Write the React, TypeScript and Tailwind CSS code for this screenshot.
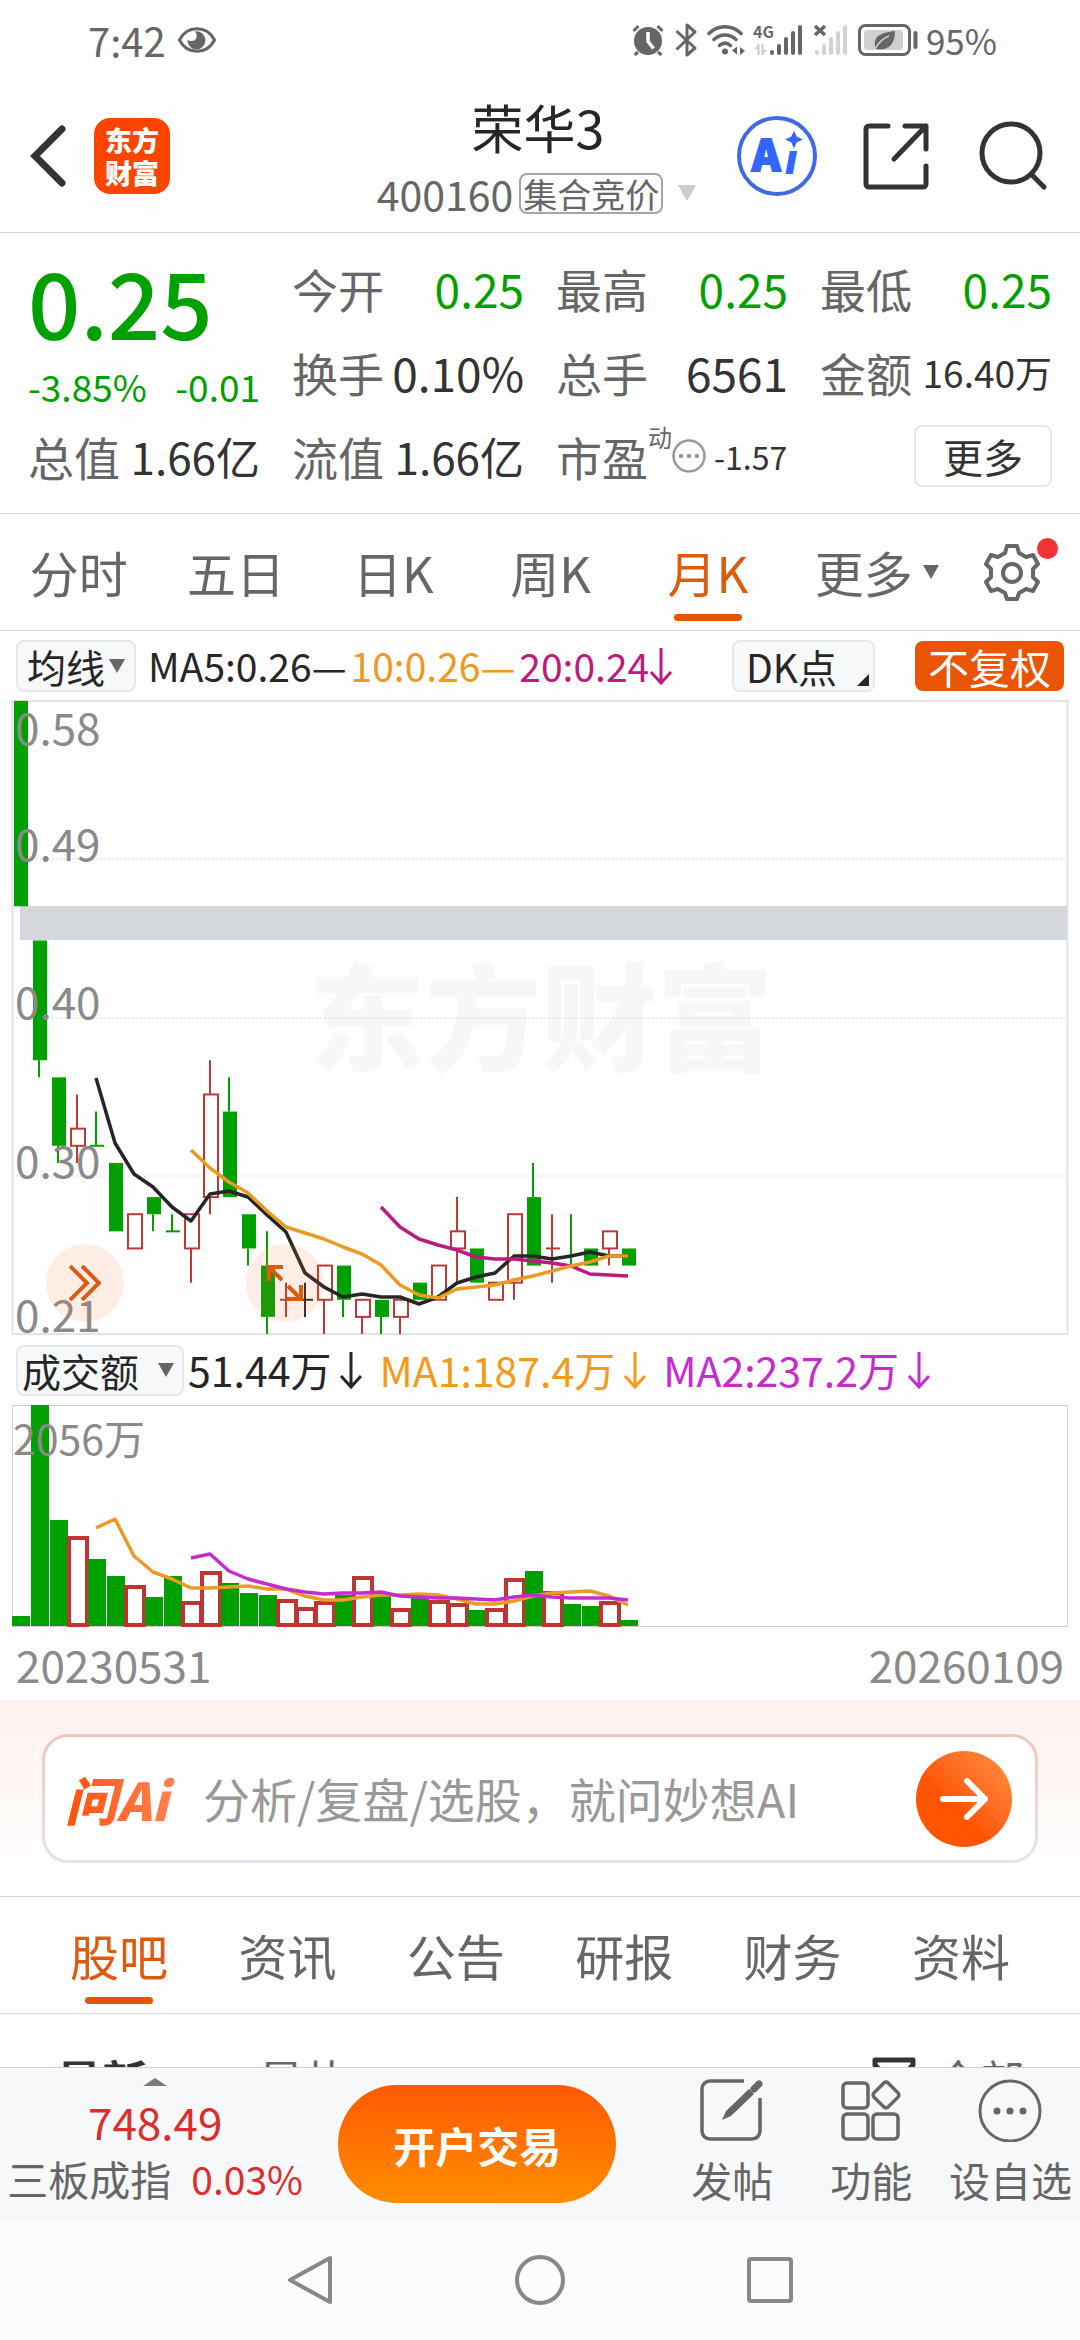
import React from "react";

type Tone = "up" | "down" | "flat";

// [tone, open, close, high, low], prices in cents
const candles: [Tone, number, number, number, number][] = [
  ["down", 58, 46, 58, 46],
  ["down", 44, 37, 44, 36],
  ["down", 36, 32, 36, 31],
  ["up", 32, 33, 35, 31],
  ["down", 32, 32, 34, 32],
  ["down", 31, 27, 31, 27],
  ["up", 26, 28, 28, 26],
  ["down", 29, 28, 29, 27],
  ["down", 27, 27, 28, 27],
  ["up", 26, 28, 28, 24],
  ["up", 29, 35, 37, 28],
  ["down", 34, 29, 36, 29],
  ["down", 28, 26, 28, 25],
  ["down", 25, 22, 27, 21],
  ["up", 23, 23, 24, 22],
  ["flat", 23, 23, 24, 22],
  ["up", 23, 25, 25, 21],
  ["down", 25, 23, 25, 22],
  ["up", 22, 23, 23, 21],
  ["down", 23, 22, 23, 21],
  ["up", 22, 23, 23, 21],
  ["down", 24, 23, 24, 23],
  ["up", 23, 25, 25, 23],
  ["up", 26, 27, 29, 24],
  ["down", 26, 24, 26, 24],
  ["up", 23, 24, 24, 23],
  ["up", 24, 28, 28, 23],
  ["down", 29, 25, 31, 25],
  ["up", 26, 26, 28, 24],
  ["down", 25, 25, 28, 25],
  ["down", 26, 25, 26, 25],
  ["up", 26, 27, 27, 25],
  ["down", 26, 25, 26, 25],
];

const volumes = [
  10, 221, 106, 90, 67, 50, 41, 29, 50, 25, 55, 43, 33, 31, 27, 19, 25, 31, 50,
  30, 18, 29, 26, 23, 16, 18, 48, 55, 35, 22, 20, 25, 6,
];

const ma5 = [
  378, 443, 474, 487, 507, 521, 494, 491, 497, 515, 532, 573, 587, 597, 594,
  597, 597, 604, 597, 583, 577, 573, 556, 556, 559, 556, 552, 556, 556,
];
const ma10 = [
  450, 468, 482, 493, 511, 527, 533, 539, 547, 554, 565, 585, 595, 598, 589,
  587, 585, 580, 576, 571, 566, 562, 556, 556,
];
const ma20 = [
  507, 527, 539, 545, 550, 557, 559, 559, 561, 563, 566, 574, 575, 576,
];
const volMa1 = [
  124, 115, 152, 168, 175, 184, 184, 183, 182, 185, 185, 192, 196, 196, 193,
  191, 191, 190, 191, 195, 200, 200, 197, 192, 189, 188, 187, 192, 201,
];
const volMa2 = [
  154, 150, 167, 175, 180, 185, 188, 190, 189, 189, 188, 192, 193, 194, 194,
  195, 196, 193, 191, 193, 194, 194, 194, 196,
];

const colors = { up: "#b93a37", down: "#00a000", flat: "#262626" };
const cx = (i: number) => 20 + i * 19;
const py = (p: number) => 634 - (p - 21) * 17.11;
const toPoints = (ys: number[], start: number) =>
  ys.map((y, i) => `${cx(start + i)},${y}`).join(" ");

const PriceChart = () => (
  <svg viewBox="0 0 1080 636" className="block w-full overflow-visible" role="img" aria-label="月K线">
    <rect x="12.5" y="1" width="1055" height="633" fill="none" stroke="#e2e3e5" strokeWidth="2" />
    <text
      x="541"
      y="362"
      textAnchor="middle"
      fontSize="116"
      className="fill-[#f7f7f7] font-black"
    >
      东方财富
    </text>
    {[159, 318, 476].map((y) => (
      <line key={y} x1="12" x2="1067" y1={y} y2={y} stroke="#dcdcdc" strokeDasharray="2 2" />
    ))}
    <rect x="20" y="206" width="1047" height="34" fill="#d4d8dc" />
    {candles.map(([tone, open, close, high, low], i) => {
      const x = cx(i);
      const top = py(Math.max(open, close));
      const bottom = py(Math.min(open, close));
      const color = colors[tone];
      return (
        <g key={i} stroke={color} strokeWidth="2">
          {high > Math.max(open, close) && <line x1={x} x2={x} y1={py(high)} y2={top} />}
          {low < Math.min(open, close) && <line x1={x} x2={x} y1={bottom} y2={py(low)} />}
          {open === close ? (
            <line x1={x - 6} x2={x + 8} y1={top} y2={top} />
          ) : tone === "up" ? (
            <rect x={x - 6} y={top} width="14" height={bottom - top} fill="#fff" />
          ) : (
            <rect x={x - 6} y={top} width="14" height={bottom - top} fill={color} stroke="none" />
          )}
        </g>
      );
    })}
    <g fill="none" strokeWidth="3.5" strokeLinejoin="round">
      <polyline points={toPoints(ma5, 4)} stroke="#262626" />
      <polyline points={toPoints(ma20, 19)} stroke="#bd1a7d" />
      <polyline points={toPoints(ma10, 9)} stroke="#eb9a24" />
    </g>
    <g fontSize="44" fill="#8a8a8a">
      <text x="15" y="45">0.58</text>
      <text x="15" y="161">0.49</text>
      <text x="15" y="319">0.40</text>
      <text x="15" y="478">0.30</text>
      <text x="15" y="632">0.21</text>
    </g>
  </svg>
);

const VolumeChart = () => (
  <svg viewBox="0 0 1080 224" className="block w-full" role="img" aria-label="成交额">
    <rect x="12.5" y="1.5" width="1055" height="221" fill="none" stroke="#cfcfcf" />
    {volumes.map((h, i) =>
      candles[i][0] === "down" ? (
        <rect key={i} x={12 + i * 19} y={222 - h} width="18" height={h} fill="#00a000" />
      ) : (
        <rect
          key={i}
          x={12 + i * 19}
          y={224 - h}
          width="18"
          height={h - 3}
          fill="#fff"
          stroke="#bf3432"
          strokeWidth="4"
        />
      )
    )}
    <g fill="none" strokeWidth="3.5" strokeLinejoin="round">
      <polyline points={toPoints(volMa1, 4)} stroke="#eb9a24" />
      <polyline points={toPoints(volMa2, 9)} stroke="#c62bcb" />
    </g>
    <text x="13" y="51" fontSize="41" fill="#8a8a8a">
      2056万
    </text>
  </svg>
);

const DownArrow = () => (
  <svg viewBox="0 0 24 40" className="h-10 w-6" fill="none" stroke="currentColor" strokeWidth="3">
    <path d="M12 2v34M2 26l10 11 10-11" />
  </svg>
);

const Caret = ({ className }: { className: string }) => (
  <svg viewBox="0 0 16 14" className={className} fill="currentColor">
    <path d="M0 0h16L8 14z" />
  </svg>
);

const StatusBar = () => (
  <div className="flex h-20 shrink-0 items-center pl-[88px] pr-[83px] text-[#666]">
    <span className="text-[40px] leading-[80px]">7:42</span>
    <svg viewBox="0 0 38 26" className="ml-3 h-[26px] w-[38px]">
      <path d="M1.500 13C9-2 29-2 36.500 13 29 28 9 28 1.500 13z" fill="none" stroke="currentColor" strokeWidth="3" />
      <path d="M17 4.500a9 9 0 1 1-7.500 8c2.500 2.500 8 2 9-2 .5-2.500 0-4.500-1.500-6z" fill="currentColor" />
    </svg>
    <div className="ml-auto flex items-center">
      <svg viewBox="0 0 32 32" className="h-8 w-8">
        <circle cx="16" cy="17" r="14" fill="currentColor" />
        <path d="M1.500 7 6.500 2M30.500 7l-5-5M6 28l-3.500 3M26 28l3.500 3" stroke="currentColor" strokeWidth="3" />
        <path d="M16 8v9.500l5.500 7" fill="none" stroke="#fff" strokeWidth="3.500" />
      </svg>
      <svg viewBox="0 0 22 34" className="ml-[11px] h-[34px] w-[22px]" fill="none" stroke="currentColor" strokeWidth="3" strokeLinejoin="round">
        <path d="M1.500 8 20 25l-8 7V2l8 7L1.500 26.500" />
      </svg>
      <svg viewBox="0 0 38 32" className="ml-2.5 h-8 w-[38px]" fill="none" stroke="currentColor" strokeWidth="3.500" strokeLinecap="round">
        <path d="M2 9.500c9-9 23-9 32 0M7 15.500c6.500-6 15.500-6 22 0M12.500 21.500c3.500-3 7.500-3 11 0" />
        <circle cx="18" cy="27.500" r="3" fill="currentColor" stroke="none" />
        <path d="M30 22.500v8l-5-4zM33 31v-8l5 4z" fill="currentColor" stroke="none" />
      </svg>
      <svg viewBox="0 0 50 32" className="ml-2 h-8 w-[50px] overflow-visible">
        <text x="0" y="14" fontSize="16" className="fill-[#666] font-bold">4G</text>
        <path d="M5.500 20v11M9.500 20v11" stroke="#ccc" strokeWidth="2" />
        <path d="M1 25l5-5v5zM14 26l-5 5v-5z" fill="#ccc" />
        <g stroke="currentColor" strokeWidth="4" strokeLinecap="round">
          <path d="M19 28v1M26 22v7M33 15v14M40 9v20M47 3v26" />
        </g>
      </svg>
      <svg viewBox="0 0 34 32" className="ml-[11px] h-8 w-[34px]">
        <path d="M1 2l10 9M11 2 1 11" stroke="currentColor" strokeWidth="3.500" />
        <g stroke="#d2d2d2" strokeWidth="4" strokeLinecap="round">
          <path d="M3 28v1M10 22v7M17 15v14M24 9v20M31 3v26" />
        </g>
      </svg>
      <svg viewBox="0 0 60 32" className="ml-2.5 h-8 w-[60px]">
        <rect x="1.500" y="1.500" width="50" height="29" rx="6" fill="none" stroke="currentColor" strokeWidth="3" />
        <rect x="6" y="6" width="39" height="20" rx="3" fill="#d0d0d0" />
        <path d="M37 7c-11 1-19 4-20 10-.5 3 0 6 1 8 11 2 19-3 19-18z" fill="currentColor" />
        <path d="M17 25c4-7 8-11 14-13" fill="none" stroke="#d0d0d0" strokeWidth="1.500" />
        <path d="M57.500 9v14" stroke="currentColor" strokeWidth="4" strokeLinecap="round" />
      </svg>
      <span className="ml-2 text-[35px] leading-[80px]">95%</span>
    </div>
  </div>
);

const Header = () => (
  <header className="grid h-[153px] shrink-0 grid-cols-[1fr_auto_1fr] items-center border-b border-[#d4d4d4] pl-[28px] pr-[32px]">
    <div className="flex items-center gap-[26px]">
      <button aria-label="返回">
        <svg viewBox="0 0 40 66" className="h-[66px] w-10" fill="none" stroke="#333" strokeWidth="7" strokeLinecap="round">
          <path d="M34 6 7 33l27 27" />
        </svg>
      </button>
      <div className="flex h-[76px] w-[76px] flex-col items-center justify-center rounded-2xl bg-[#ff4400] text-[27px] font-black leading-[33px] text-white">
        <span>东方</span>
        <span>财富</span>
      </div>
    </div>
    <div className="flex flex-col items-center pt-2 leading-[66px]">
      <h1 className="text-[52px] text-[#262626]">荣华3</h1>
      <button className="flex items-center text-[#666]">
        <span className="text-[41px]">400160</span>
        <span className="ml-1.5 rounded-lg border-2 border-[#a5a5a5] px-0.5 text-[34px] leading-[37px]">
          集合竞价
        </span>
        <Caret className="ml-3 h-4 w-6 text-[#ccc]" />
      </button>
    </div>
    <div className="flex items-center justify-end">
      <button aria-label="AI">
        <svg viewBox="0 0 82 82" className="h-[82px] w-[82px]">
          <circle cx="41" cy="41" r="38" fill="#fff" stroke="#4169e1" strokeWidth="4" />
          <g className="fill-[#3366ff] stroke-[#3366ff] font-black">
            <text x="16" y="56" fontSize="43" strokeWidth="2">A</text>
            <text x="50" y="58" fontSize="38" fontStyle="italic" strokeWidth="2">ı</text>
          </g>
          <path d="M58 18l2 4.500 4.500 2-4.500 2L58 31l-2-4.500-4.500-2 4.500-2z" fill="#3366ff" stroke="#3366ff" strokeWidth="2" />
        </svg>
      </button>
      <button aria-label="分享" className="ml-[44px]">
        <svg viewBox="0 0 70 70" className="h-[70px] w-[70px]" fill="none" stroke="#333" strokeWidth="5" strokeLinecap="round" strokeLinejoin="round">
          <path d="M26 5H7a3 3 0 0 0-3 3v55a3 3 0 0 0 3 3h54a3 3 0 0 0 3-3V45M43 5h21v23M64 5 32 38" />
        </svg>
      </button>
      <button aria-label="搜索" className="ml-[46px]">
        <svg viewBox="0 0 70 70" className="h-[70px] w-[70px]" fill="none" stroke="#333" strokeWidth="5" strokeLinecap="round">
          <circle cx="33" cy="32" r="29" />
          <path d="m53 53 13 13" />
        </svg>
      </button>
    </div>
  </header>
);

const Stat = ({ label, value, className }: { label: string; value: string; className: string }) => (
  <div className="flex items-center justify-between whitespace-nowrap leading-[84px]">
    <span className="text-[46px] text-[#666]">{label}</span>
    <span className={className}>{value}</span>
  </div>
);

const Quote = () => (
  <section className="grid shrink-0 auto-rows-[84px] grid-cols-4 gap-x-8 border-b border-[#d4d4d4] px-[28px] pb-[15px] pt-[13px]">
    <div className="row-span-2 text-[#00a000]">
      <div className="text-[92px] font-medium leading-[108px]">0.25</div>
      <div className="flex justify-between text-[37px] leading-[64px]">
        <span>-3.85%</span>
        <span>-0.01</span>
      </div>
    </div>
    <Stat label="今开" value="0.25" className="text-[46px] text-[#00a000]" />
    <Stat label="最高" value="0.25" className="text-[46px] text-[#00a000]" />
    <Stat label="最低" value="0.25" className="text-[46px] text-[#00a000]" />
    <Stat label="换手" value="0.10%" className="text-[46px] text-[#333]" />
    <Stat label="总手" value="6561" className="text-[46px] text-[#333]" />
    <Stat label="金额" value="16.40万" className="text-[37px] text-[#333]" />
    <Stat label="总值" value="1.66亿" className="text-[44px] text-[#333]" />
    <Stat label="流值" value="1.66亿" className="text-[44px] text-[#333]" />
    <div className="flex items-center whitespace-nowrap leading-[84px]">
      <span className="text-[46px] text-[#666]">市盈</span>
      <span className="self-start text-[24px] leading-[46px] text-[#666]">动</span>
      <svg viewBox="0 0 34 34" className="h-[34px] w-[34px]" fill="#999">
        <circle cx="17" cy="17" r="15.500" fill="none" stroke="#999" strokeWidth="2.500" />
        <circle cx="9" cy="17" r="2.200" />
        <circle cx="17" cy="17" r="2.200" />
        <circle cx="25" cy="17" r="2.200" />
      </svg>
      <span className="ml-2 text-[32px] text-[#333]">-1.57</span>
    </div>
    <button className="h-[62px] w-[138px] self-center justify-self-end rounded-lg border-2 border-[#e8e8e8] text-[40px] leading-[54px] text-[#333]">
      更多
    </button>
  </section>
);

const periods = ["分时", "五日", "日K", "周K", "月K"];

const PeriodTabs = () => (
  <nav className="grid h-[117px] shrink-0 grid-cols-[repeat(5,157fr)_180fr_91fr] border-b border-[#d4d4d4] pr-[22px] text-[49px] text-[#666]">
    {periods.map((p) =>
      p === "月K" ? (
        <button key={p} className="relative text-[#dd5a0f]">
          {p}
          <span className="absolute bottom-[9px] left-1/2 h-[7px] w-[68px] -translate-x-1/2 rounded-full bg-[#e65505]" />
        </button>
      ) : (
        <button key={p}>{p}</button>
      )
    )}
    <button className="flex items-center justify-center gap-2.5">
      更多
      <Caret className="h-3.5 w-4" />
    </button>
    <button aria-label="设置" className="relative flex items-center justify-center">
      <svg viewBox="0 0 56 58" className="h-[58px] w-14" fill="none" stroke="currentColor" strokeWidth="4" strokeLinejoin="round">
        <path d="M23 3h10l2 7 7 4 7-2 5 9-5 5v8l5 5-5 9-7-2-7 4-2 6H23l-2-6-7-4-7 2-5-9 5-5v-8l-5-5 5-9 7 2 7-4z" />
        <circle cx="28" cy="30" r="9" />
      </svg>
      <span className="absolute right-0 top-6 h-[21px] w-[21px] rounded-full bg-[#f03434]" />
    </button>
  </nav>
);

const Toolbar = () => (
  <div className="flex h-[69px] shrink-0 items-center whitespace-nowrap pl-4 pr-4 text-[39px] text-[#262626]">
    <button className="flex h-[52px] w-[120px] items-center justify-center gap-1 rounded-lg border-2 border-[#e6e7ea] bg-[#f7f8fa] leading-[46px]">
      均线
      <Caret className="h-3.5 w-4 text-[#666]" />
    </button>
    <span className="ml-3">MA5:0.26—</span>
    <span className="ml-1 text-[#eb9a24]">10:0.26—</span>
    <span className="ml-1 flex items-center text-[#bd1a7d]">
      20:0.24
      <DownArrow />
    </span>
    <button className="relative ml-auto h-[52px] w-[143px] rounded-lg border-2 border-[#e6e7ea] bg-[#f7f8fa] pl-3 text-left leading-[44px]">
      DK点
      <svg viewBox="0 0 12 12" className="absolute bottom-1 right-1 h-3 w-3" fill="currentColor">
        <path d="M12 0v12H0z" />
      </svg>
    </button>
    <button className="ml-10 h-[50px] w-[149px] rounded-lg bg-[#e95504] text-[41px] leading-[46px] text-white">
      不复权
    </button>
  </div>
);

const VolumeBar = () => (
  <div className="flex h-[68px] shrink-0 items-center whitespace-nowrap pl-4 text-[41px] text-[#262626]">
    <button className="flex h-[51px] w-[168px] items-center justify-between rounded-lg border-2 border-[#e6e7ea] bg-[#f7f8fa] pl-1 pr-2 text-[39px] leading-[46px]">
      成交额
      <Caret className="h-3.5 w-4 text-[#666]" />
    </button>
    <span className="ml-1 flex items-center gap-2">
      51.44万
      <DownArrow />
    </span>
    <span className="ml-4 flex items-center gap-2 text-[#f39a1b]">
      MA1:187.4万
      <DownArrow />
    </span>
    <span className="ml-4 flex items-center gap-2 text-[#c62bcb]">
      MA2:237.2万
      <DownArrow />
    </span>
  </div>
);

const AskAi = () => (
  <section className="shrink-0 border-b border-[#d4d4d4] bg-linear-to-b from-[#fff2ee] to-white px-[42px] pb-[33px] pt-[34px]">
    <div className="rounded-[26px] bg-linear-to-b from-[#f2c4bb] to-[#dfe6f2] p-[3px]">
      <form className="flex h-[123px] items-center rounded-[23px] bg-white pl-5 pr-[23px]">
        <span className="w-[118px] bg-linear-to-r from-[#ff5000] to-[#ff8552] bg-clip-text text-[52px] font-black italic leading-[60px] text-transparent">
          问Ai
        </span>
        <input
          aria-label="问AI"
          placeholder="分析/复盘/选股，就问妙想AI"
          className="ml-5 min-w-0 flex-1 text-[47px] outline-none placeholder:text-[#999]"
        />
        <button
          type="button"
          aria-label="发送"
          className="flex h-24 w-24 items-center justify-center rounded-full bg-linear-to-bl from-[#ff9040] to-[#ff5500] to-60%"
        >
          <svg viewBox="0 0 48 42" className="h-[42px] w-12" fill="none" stroke="#fff" strokeWidth="6" strokeLinecap="round" strokeLinejoin="round">
            <path d="M3 21h42M27 3l18 18-18 18" />
          </svg>
        </button>
      </form>
    </div>
  </section>
);

const sections = ["股吧", "资讯", "公告", "研报", "财务", "资料"];

const SectionTabs = () => (
  <nav className="flex h-[117px] shrink-0 justify-between border-b border-[#d4d4d4] px-[70px] text-[49px] text-[#666]">
    {sections.map((s, i) =>
      i === 0 ? (
        <button key={s} className="relative text-[#dd5a0f]">
          {s}
          <span className="absolute bottom-[9px] left-1/2 h-[7px] w-[68px] -translate-x-1/2 rounded-full bg-[#e65505]" />
        </button>
      ) : (
        <button key={s}>{s}</button>
      )
    )}
  </nav>
);

const BottomBar = () => (
  <footer className="grid h-[153px] shrink-0 grid-cols-[310fr_352fr_139fr_139fr_139fr] border-t border-[#d0d2d5] bg-[#f7f8fa] text-[#666]">
    <div className="flex flex-col items-center whitespace-nowrap pt-2.5">
      <svg viewBox="0 0 24 8" className="h-2 w-6" fill="#7a7b7e">
        <path d="M12 0l12 8H0z" />
      </svg>
      <span className="text-[44px] leading-[70px] text-[#d92f2f]">748.49</span>
      <span className="flex items-center gap-5 text-[41px] leading-[44px]">
        三板成指
        <span className="text-[39px] text-[#d92f2f]">0.03%</span>
      </span>
    </div>
    <div className="flex items-center pl-7">
      <button className="h-[118px] w-[278px] rounded-full bg-linear-to-b from-[#ff5800] to-[#ff8c00] text-[42px] font-bold text-white">
        开户交易
      </button>
    </div>
    <button className="flex flex-col items-center gap-1 pt-2.5 text-[41px] leading-[66px]">
      <svg viewBox="0 0 64 64" className="h-16 w-16" fill="none" stroke="currentColor" strokeWidth="3.500">
        <path d="M44 3H10a8 8 0 0 0-8 8v42a8 8 0 0 0 8 8h42a8 8 0 0 0 8-8V20" />
        <path d="M22 42l4-9 23-22 5 5-23 22z" fill="currentColor" stroke="none" />
        <path d="M54 11l5-5" strokeWidth="7" strokeLinecap="round" />
      </svg>
      发帖
    </button>
    <button className="flex flex-col items-center gap-1 pt-2.5 text-[41px] leading-[66px]">
      <svg viewBox="0 0 64 64" className="h-16 w-16" fill="none" stroke="currentColor" strokeWidth="3.500">
        <rect x="4" y="5" width="25" height="25" rx="4" />
        <rect x="4" y="36" width="25" height="25" rx="4" />
        <rect x="34" y="36" width="25" height="25" rx="4" />
        <rect x="37" y="7" width="20" height="20" rx="3" transform="rotate(45 47 17)" />
      </svg>
      功能
    </button>
    <button className="flex flex-col items-center gap-1 whitespace-nowrap pt-2.5 text-[41px] leading-[66px]">
      <svg viewBox="0 0 64 64" className="h-16 w-16" fill="currentColor">
        <circle cx="32" cy="33" r="30" fill="none" stroke="currentColor" strokeWidth="3" />
        <circle cx="19" cy="33" r="3.500" />
        <circle cx="32" cy="33" r="3.500" />
        <circle cx="45" cy="33" r="3.500" />
      </svg>
      设自选
    </button>
  </footer>
);

const SystemNav = () => (
  <div className="flex h-[120px] shrink-0 items-center justify-center gap-[180px] bg-[#fcfcfc]">
    <button aria-label="后退">
      <svg viewBox="0 0 50 50" className="h-[50px] w-[50px]" fill="none" stroke="#888" strokeWidth="4" strokeLinejoin="round">
        <path d="M45 3v44L5 25z" />
      </svg>
    </button>
    <button aria-label="主页">
      <svg viewBox="0 0 50 50" className="h-[50px] w-[50px]" fill="none" stroke="#888" strokeWidth="4">
        <circle cx="25" cy="25" r="23" />
      </svg>
    </button>
    <button aria-label="最近任务">
      <svg viewBox="0 0 50 50" className="h-[50px] w-[50px]" fill="none" stroke="#888" strokeWidth="4">
        <rect x="4" y="4" width="42" height="42" rx="2" />
      </svg>
    </button>
  </div>
);

const App: React.FC = () => {
  return (
    <div className="flex h-screen flex-col overflow-hidden bg-[#fefefe] font-['Noto_Sans_CJK_SC',sans-serif]">
      <StatusBar />
      <Header />
      <Quote />
      <PeriodTabs />
      <Toolbar />
      <div className="relative shrink-0">
        <PriceChart />
        <button
          aria-label="快进"
          className="absolute bottom-[14px] left-[46px] flex h-[78px] w-[78px] items-center justify-center rounded-full bg-[#f9762f]/12"
        >
          <svg viewBox="0 0 32 36" className="h-9 w-8" fill="none" stroke="#dd5a14" strokeWidth="4">
            <path d="M1 1l17 17L1 35M13 1l17 17-17 17" />
          </svg>
        </button>
        <button
          aria-label="全屏"
          className="absolute bottom-[14px] left-[246px] flex h-[78px] w-[78px] items-center justify-center rounded-full bg-[#f9762f]/12"
        >
          <svg viewBox="0 0 38 38" className="h-[38px] w-[38px]" fill="none" stroke="#e0590e" strokeWidth="4">
            <path d="M17 3H3v14M3 3l13 13M21 35h14V21M35 35 22 22" />
          </svg>
        </button>
      </div>
      <VolumeBar />
      <div className="shrink-0">
        <VolumeChart />
      </div>
      <div className="flex h-[72px] shrink-0 items-center justify-between pl-[16px] pr-[16px] text-[44px] leading-[68px] text-[#8a8a8a]">
        <span>20230531</span>
        <span>20260109</span>
      </div>
      <AskAi />
      <SectionTabs />
      {/* feed list, cut off by the bottom bar */}
      <div className="min-h-0 flex-1 overflow-hidden">
        <div className="flex h-[130px] items-center pl-[56px] pr-[56px] text-[46px] text-[#666]">
          <span className="font-bold text-[#333]">最新</span>
          <span className="ml-[110px]">最热</span>
          <svg viewBox="0 0 44 44" className="ml-auto h-11 w-11" fill="none" stroke="#333" strokeWidth="5" strokeLinejoin="round">
            <path d="M3 3h38v5L27 23v18l-10-5V23L3 8z" />
          </svg>
          <span className="ml-5 text-[44px]">全部</span>
        </div>
      </div>
      <BottomBar />
      <SystemNav />
    </div>
  );
};

export default App;
